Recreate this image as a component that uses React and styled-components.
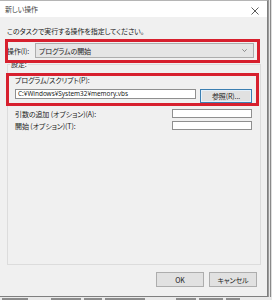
import React from "react";
import styled, { createGlobalStyle } from "styled-components";

const Global = createGlobalStyle`
  html, body { margin: 0; padding: 0; background: #d6d6d6; }
  body { font-family: "Noto Sans CJK JP", "Noto Sans", sans-serif; }
  * { box-sizing: border-box; }
`;

const Screen = styled.div`
  width: 272px;
  height: 300px;
  display: flex;
  flex-direction: column;
  overflow: hidden;
  background: #d9d9d9;
`;

const Top = styled.div`
  display: flex;
  height: 297px;
`;

const Dialog = styled.div`
  width: 268px;
  height: 297px;
  background: #f0f0f0;
  border-top: 1px solid #b5b5b5;
  border-right: 1px solid #7f7f7f;
  border-bottom: 1px solid #7f7f7f;
  display: flex;
  flex-direction: column;
  color: #222;
  font-size: 7px;
  font-feature-settings: "palt";
  letter-spacing: -0.1px;
`;

const RightStrip = styled.div`
  flex: 1;
  background: linear-gradient(to right, #e6e6e6 0, #e6e6e6 1px, #8a8a8a 1px, #8a8a8a 2px, #dedede 2px);
  border-left: 1px solid #9a9a9a;
`;

const BottomStrip = styled.div`
  height: 3px;
  background: #e9e9e9;
  display: flex;
  gap: 3px;
  padding-left: 2px;
  align-items: flex-end;
`;

const Smudge = styled.span`
  display: block;
  height: 2px;
  width: ${(p) => p.w}px;
  margin-left: ${(p) => p.ml || 0}px;
  background: #8c8c8c;
`;

const TitleBar = styled.div`
  height: 16px;
  background: #ffffff;
  display: flex;
  align-items: center;
  justify-content: space-between;
  padding: 0 5px 0 5px;
  flex-shrink: 0;
`;

const Title = styled.span`
  font-size: 7px;
  color: #444;
`;

const CloseBtn = styled.span`
  display: flex;
  width: 8px;
  height: 8px;
  margin-right: 3px;
  margin-top: 3px;
`;

const Body = styled.div`
  flex: 1;
  display: flex;
  flex-direction: column;
  padding: 0 6px 0 7px;
`;

const Instruction = styled.div`
  margin-top: 9px;
  line-height: 10px;
  height: 10px;
  white-space: nowrap;
`;

const Annotated = styled.div`
  position: relative;
  &::after {
    content: "";
    position: absolute;
    top: ${(p) => p.t}px;
    left: ${(p) => p.l}px;
    right: ${(p) => p.r}px;
    bottom: ${(p) => p.b}px;
    border: 3px solid #d7202e;
    pointer-events: none;
  }
`;

const ActionRow = styled(Annotated)`
  margin-top: 7px;
  margin-right: 7px;
  height: 15px;
  display: flex;
  align-items: center;
  z-index: 1;
`;

const ActionLabel = styled.span`
  width: 28px;
  white-space: nowrap;
  line-height: 10px;
`;

const Select = styled.div`
  flex: 1;
  height: 15px;
  background: #e5e5e5;
  border: 1px solid #adadad;
  display: flex;
  align-items: center;
  justify-content: space-between;
  padding: 0 6px 0 3px;
  line-height: 10px;
`;

const Group = styled.fieldset`
  margin: 1px 0 0 0;
  padding: 6px 8px 0 7px;
  border: 1px solid #dcdcdc;
  height: 206px;
  min-width: 0;
`;

const Legend = styled.legend`
  padding: 0 1px;
  margin-left: -5px;
  line-height: 10px;
  font-size: 7px;
`;

const ProgramSection = styled(Annotated)`
  display: flex;
  flex-direction: column;
`;

const FieldLabel = styled.div`
  line-height: 10px;
  height: 10px;
  white-space: nowrap;
`;

const InputRow = styled.div`
  margin-top: 4px;
  display: flex;
  align-items: flex-start;
  gap: 4px;
`;

const TextBox = styled.div`
  width: ${(p) => p.w}px;
  flex: ${(p) => (p.w ? "none" : 1)};
  height: ${(p) => p.h || 10}px;
  background: #fff;
  border: 1px solid #8f8f8f;
  font-family: "Noto Sans", sans-serif;
  font-size: 6.4px;
  letter-spacing: 0;
  line-height: 8px;
  padding-left: 2px;
  white-space: nowrap;
  overflow: hidden;
`;

const Button = styled.div`
  width: ${(p) => p.w}px;
  height: ${(p) => p.h}px;
  background: #e1e1e1;
  border: 1px solid ${(p) => (p.focus ? "#3c7fb1" : "#adadad")};
  box-shadow: ${(p) => (p.focus ? "inset 0 0 0 1px #e5f1fb" : "none")};
  display: flex;
  align-items: center;
  justify-content: center;
  line-height: 10px;
  white-space: nowrap;
`;

const OptionRow = styled.div`
  margin-top: ${(p) => p.mt}px;
  display: flex;
  align-items: center;
  justify-content: space-between;
  height: 9px;
`;

const Footer = styled.div`
  margin-top: 7px;
  margin-right: 4px;
  display: flex;
  justify-content: flex-end;
  gap: 5px;
`;

export default function App() {
  return (
    <>
      <Global />
      <Screen>
        <Top>
          <Dialog>
            <TitleBar>
              <Title>新しい操作</Title>
              <CloseBtn>
                <svg width="8" height="8" viewBox="0 0 8 8">
                  <path d="M0.5 0.5 L7.5 7.5 M7.5 0.5 L0.5 7.5" stroke="#333" strokeWidth="0.8" />
                </svg>
              </CloseBtn>
            </TitleBar>
            <Body>
              <Instruction>このタスクで実行する操作を指定してください。</Instruction>
              <ActionRow t={-4} l={-2} r={-6} b={-5}>
                <ActionLabel>操作(I):</ActionLabel>
                <Select>
                  <span>プログラムの開始</span>
                  <svg width="5" height="3" viewBox="0 0 5 3">
                    <path d="M0.3 0.3 L2.5 2.5 L4.7 0.3" fill="none" stroke="#666" strokeWidth="0.7" />
                  </svg>
                </Select>
              </ActionRow>
              <Group>
                <Legend>設定:</Legend>
                <ProgramSection t={-2} l={-9} r={-7} b={-3}>
                  <FieldLabel>プログラム/スクリプト(P):</FieldLabel>
                  <InputRow>
                    <TextBox>C:¥Windows¥System32¥memory.vbs</TextBox>
                    <Button w={52} h={14} focus>参照(R)...</Button>
                  </InputRow>
                </ProgramSection>
                <OptionRow mt={6}>
                  <FieldLabel>引数の追加 (オプション)(A):</FieldLabel>
                  <TextBox w={80} h={9} />
                </OptionRow>
                <OptionRow mt={3}>
                  <FieldLabel>開始 (オプション)(T):</FieldLabel>
                  <TextBox w={80} h={9} />
                </OptionRow>
              </Group>
              <Footer>
                <Button w={48} h={15}>OK</Button>
                <Button w={48} h={15}>キャンセル</Button>
              </Footer>
            </Body>
          </Dialog>
          <RightStrip />
        </Top>
        <BottomStrip>
          <Smudge w={26} />
          <Smudge w={30} ml={20} />
          <Smudge w={18} />
          <Smudge w={40} />
          <Smudge w={20} ml={28} />
          <Smudge w={24} />
          <Smudge w={14} />
        </BottomStrip>
      </Screen>
    </>
  );
}
